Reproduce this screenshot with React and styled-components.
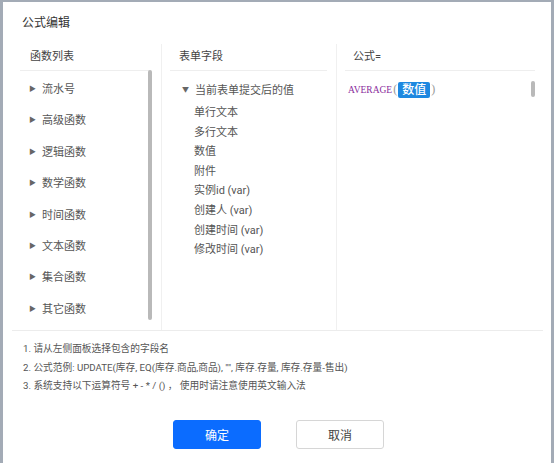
import styled, { createGlobalStyle } from "styled-components";

const GlobalStyle = createGlobalStyle`
  html, body {
    margin: 0;
    padding: 0;
    background: #fff;
  }
  body {
    font-family: "Roboto", "Noto Sans CJK SC", sans-serif;
    color: #444;
  }
`;

const functions = [
  "流水号",
  "高级函数",
  "逻辑函数",
  "数学函数",
  "时间函数",
  "文本函数",
  "集合函数",
  "其它函数",
];

const fields = [
  "单行文本",
  "多行文本",
  "数值",
  "附件",
  "实例id (var)",
  "创建人 (var)",
  "创建时间 (var)",
  "修改时间 (var)",
];

const notes = [
  "1. 请从左侧面板选择包含的字段名",
  '2. 公式范例: UPDATE(库存, EQ(库存.商品,商品), "", 库存.存量, 库存.存量-售出)',
  "3. 系统支持以下运算符号 + - * / () ，  使用时请注意使用英文输入法",
];

export default function App() {
  return (
    <>
      <GlobalStyle />
      <Frame>
        <TitleStyled>公式编辑</TitleStyled>
        <PanelsStyled>
          <ColumnStyled>
            <HeaderStyled indent={10}>函数列表</HeaderStyled>
            <FuncList>
              {functions.map((name) => (
                <FuncItem key={name}>
                  <Caret>▶</Caret>
                  {name}
                </FuncItem>
              ))}
            </FuncList>
            <ScrollThumb style={{ top: 26, height: 250, right: 9 }} />
          </ColumnStyled>
          <ColumnStyled divider>
            <HeaderStyled indent={9} right={9}>
              表单字段
            </HeaderStyled>
            <GroupRow>
              <Caret>▼</Caret>
              当前表单提交后的值
            </GroupRow>
            <FieldList>
              {fields.map((name) => (
                <FieldItem key={name}>{name}</FieldItem>
              ))}
            </FieldList>
          </ColumnStyled>
          <ColumnStyled divider>
            <HeaderStyled indent={8} right={8}>
              公式=
            </HeaderStyled>
            <FormulaLine>
              <FnName>AVERAGE</FnName>
              <Paren>(</Paren>
              <FieldTag>数值</FieldTag>
              <Paren>)</Paren>
            </FormulaLine>
            <ScrollThumb style={{ top: 37, height: 16, right: 8 }} />
          </ColumnStyled>
        </PanelsStyled>
        <NotesStyled>
          {notes.map((n) => (
            <div key={n}>{n}</div>
          ))}
        </NotesStyled>
        <ButtonRow>
          <ButtonStyled primary>确定</ButtonStyled>
          <ButtonStyled>取消</ButtonStyled>
        </ButtonRow>
      </Frame>
    </>
  );
}

const Frame = styled.div`
  box-sizing: border-box;
  width: 554px;
  height: 463px;
  border-left: 3px solid #a3abb6;
  border-right: 3px solid #a3abb6;
  border-top: 2px solid #a3abb6;
  background: #fff;
  display: flex;
  flex-direction: column;
  overflow: hidden;
`;

const TitleStyled = styled.div`
  font-size: 12px;
  color: #333;
  line-height: 16px;
  padding: 13px 0 0 19px;
  height: 30px;
  box-sizing: border-box;
`;

const PanelsStyled = styled.div`
  margin: 12px 8px 0 9px;
  height: 286px;
  border-bottom: 1px solid #ececec;
  display: grid;
  grid-template-columns: 149px 175px 1fr;
`;

const ColumnStyled = styled.div`
  position: relative;
  border-left: ${({ divider }) => (divider ? "1px solid #f0f0f0" : "none")};
  min-width: 0;
`;

const HeaderStyled = styled.div`
  height: 26px;
  line-height: 26px;
  font-size: 11px;
  color: #444;
  margin: 0 ${({ right }) => right || 12}px 0 8px;
  padding-left: ${({ indent }) => indent}px;
  border-bottom: 1px solid #eeeeee;
`;

const FuncList = styled.div`
  padding-top: 3px;
`;

const FuncItem = styled.div`
  height: 31.4px;
  line-height: 31.4px;
  font-size: 11px;
  color: #555;
  padding-left: 17px;
  display: flex;
  align-items: center;
`;

const Caret = styled.span`
  font-size: 7px;
  color: #666;
  width: 13px;
  display: inline-block;
`;

const GroupRow = styled.div`
  font-size: 11px;
  color: #555;
  padding: 3px 0 0 20px;
  box-sizing: border-box;
  height: 32px;
  display: flex;
  align-items: center;
`;

const FieldList = styled.div`
  padding-left: 32px;
`;

const FieldItem = styled.div`
  height: 19.6px;
  line-height: 19.6px;
  font-size: 11px;
  color: #555;
  white-space: nowrap;
`;

const FormulaLine = styled.div`
  display: flex;
  align-items: center;
  padding: 10px 0 0 11px;
  height: 17px;
`;

const FnName = styled.span`
  font-family: "Liberation Serif", serif;
  font-size: 9.5px;
  color: #8a2c9c;
`;

const Paren = styled.span`
  font-family: "Liberation Serif", serif;
  font-size: 12px;
  color: #999;
  margin: 0 1px;
`;

const FieldTag = styled.span`
  background: #1e88e0;
  color: #fff;
  font-size: 12px;
  font-weight: 500;
  height: 16px;
  line-height: 16px;
  padding: 0 4px;
  border-radius: 2px;
`;

const ScrollThumb = styled.div`
  position: absolute;
  width: 4px;
  border-radius: 2px;
  background: #b9b9b9;
`;

const NotesStyled = styled.div`
  padding: 9px 0 0 20px;
  font-size: 9.7px;
  line-height: 18.5px;
  color: #555;
  white-space: nowrap;
`;

const ButtonRow = styled.div`
  display: flex;
  gap: 35px;
  padding: 0 0 0 170px;
  margin-top: 24px;
`;

const ButtonStyled = styled.button`
  width: 88px;
  height: 29px;
  box-sizing: border-box;
  border-radius: 3px;
  font-family: "Roboto", "Noto Sans CJK SC", sans-serif;
  font-size: 12px;
  cursor: pointer;
  border: 1px solid ${({ primary }) => (primary ? "#0b6cff" : "#d6d6d6")};
  background: ${({ primary }) => (primary ? "#0b6cff" : "#fff")};
  color: ${({ primary }) => (primary ? "#fff" : "#444")};
`;
